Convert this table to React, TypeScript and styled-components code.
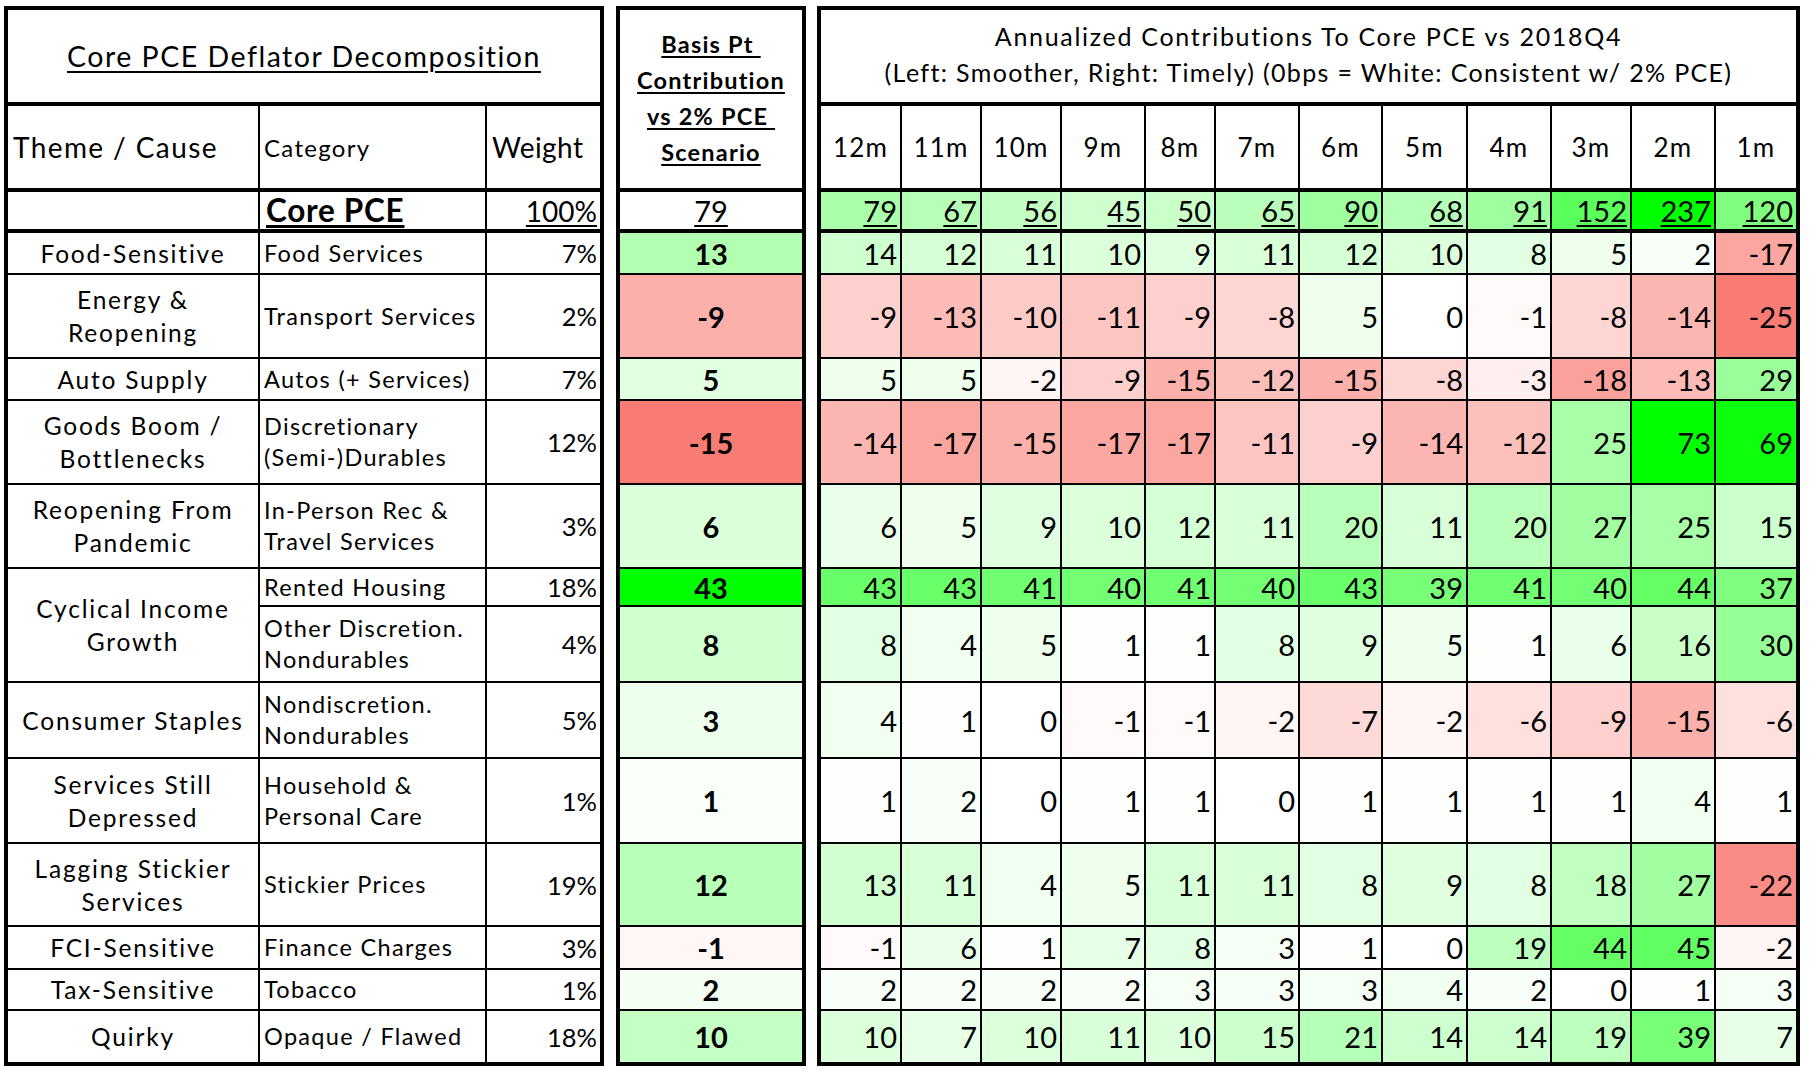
import React from "react";
import styled, { createGlobalStyle } from "styled-components";

const GlobalStyle = createGlobalStyle`
  body {
    margin: 0;
    background: #fff;
    color: #000;
    font-family: Lato, "Noto Sans", sans-serif;
  }
`;

// row heights are shared by the three panels, so the lines meet up
const ROWS = "96px 86px 41px 42px 84px 42px 84px 84px 38px 76px 76px 85px 83px 43px 41px 51px";
const LAST_ROW = 15;

const Page = styled.div`
  display: flex;
  align-items: flex-start;
  padding: 6px 0 0 4px;
`;

const Panel = styled.div<{ $cols: string; $gap: number }>`
  display: grid;
  grid-template-columns: ${(p) => p.$cols};
  grid-template-rows: ${ROWS};
  border: 4px solid #000;
  margin-left: ${(p) => p.$gap}px;
`;

const Cell = styled.div<{ $bottom: number; $right: boolean; $bg?: string }>`
  box-sizing: border-box;
  display: flex;
  align-items: center;
  overflow: hidden;
  white-space: pre;
  border-bottom: ${(p) => p.$bottom}px solid #000;
  border-right: ${(p) => (p.$right ? 2 : 0)}px solid #000;
  background: ${(p) => p.$bg ?? "#fff"};
`;

const TitleCell = styled(Cell)<{ $span: number; $lift?: number }>`
  grid-column: span ${(p) => p.$span};
  flex-direction: column;
  justify-content: center;
  text-align: center;
  padding-bottom: ${(p) => p.$lift ?? 0}px;
`;

const MainTitle = styled.span`
  font-size: 28.5px;
  letter-spacing: 1.5px;
  text-decoration: underline;
  text-underline-offset: 4px;
  text-decoration-thickness: 1.5px;
`;

const SubTitle = styled.span<{ $spacing: number }>`
  font-size: 25px;
  letter-spacing: ${(p) => p.$spacing}px;
  line-height: 36px;
`;

const BasisTitle = styled(Cell)`
  grid-row: span 2;
  justify-content: center;
  text-align: center;
  font-size: 23.5px;
  font-weight: 700;
  letter-spacing: 1.2px;
  line-height: 36px;
  padding-bottom: 2px;
  text-decoration: underline;
  text-underline-offset: 3px;
  text-decoration-thickness: 1.5px;
`;

const HeadCell = styled(Cell)<{ $size: number; $pad?: number; $spacing?: number }>`
  font-size: ${(p) => p.$size}px;
  letter-spacing: ${(p) => p.$spacing ?? 0}px;
  padding-left: ${(p) => p.$pad ?? 4}px;
`;

const MonthCell = styled(Cell)`
  justify-content: center;
  font-size: 26px;
  letter-spacing: 1.2px;
`;

const ThemeCell = styled(Cell)<{ $span: number }>`
  grid-column: 1;
  grid-row: span ${(p) => p.$span};
  justify-content: center;
  text-align: center;
  font-size: 24.5px;
  letter-spacing: 1.8px;
  line-height: 33px;
`;

const CategoryCell = styled(Cell)<{ $strong?: boolean }>`
  grid-column: 2;
  padding-left: ${(p) => (p.$strong ? 6 : 4)}px;
  font-size: ${(p) => (p.$strong ? 31.5 : 23.5)}px;
  font-weight: ${(p) => (p.$strong ? 700 : 400)};
  letter-spacing: ${(p) => (p.$strong ? 0.7 : 1.3)}px;
  line-height: 31px;
  text-decoration: ${(p) => (p.$strong ? "underline" : "none")};
  text-underline-offset: 3px;
`;

const WeightCell = styled(Cell)<{ $under?: boolean }>`
  grid-column: 3;
  justify-content: flex-end;
  padding-right: 3px;
  font-size: ${(p) => (p.$under ? 28 : 25.5)}px;
  text-decoration: ${(p) => (p.$under ? "underline" : "none")};
  text-underline-offset: 3px;
`;

const BasisCell = styled(Cell)<{ $under?: boolean }>`
  justify-content: center;
  font-size: 29px;
  font-weight: ${(p) => (p.$under ? 400 : 700)};
  text-decoration: ${(p) => (p.$under ? "underline" : "none")};
  text-underline-offset: 3px;
`;

const NumCell = styled(Cell)<{ $under?: boolean }>`
  justify-content: flex-end;
  padding-right: 3px;
  font-size: 29px;
  text-decoration: ${(p) => (p.$under ? "underline" : "none")};
  text-underline-offset: 3px;
  text-decoration-thickness: 1.5px;
`;

type Row = {
  theme?: string;
  span?: number;
  category: string;
  weight: string;
  basis: number;
  months: number[];
};

const MONTHS = ["12m", "11m", "10m", "9m", "8m", "7m", "6m", "5m", "4m", "3m", "2m", "1m"];
const MONTH_COLS = "81px 80px 80px 84px 70px 84px 83px 85px 84px 80px 84px 80px";

const CORE = { basis: 79, months: [79, 67, 56, 45, 50, 65, 90, 68, 91, 152, 237, 120] };

const ROWS_DATA: Row[] = [
  { theme: "Food-Sensitive", category: "Food Services", weight: "7%", basis: 13, months: [14, 12, 11, 10, 9, 11, 12, 10, 8, 5, 2, -17] },
  { theme: "Energy &\nReopening", category: "Transport Services", weight: "2%", basis: -9, months: [-9, -13, -10, -11, -9, -8, 5, 0, -1, -8, -14, -25] },
  { theme: "Auto Supply", category: "Autos (+ Services)", weight: "7%", basis: 5, months: [5, 5, -2, -9, -15, -12, -15, -8, -3, -18, -13, 29] },
  { theme: "Goods Boom /\nBottlenecks", category: "Discretionary\n(Semi-)Durables", weight: "12%", basis: -15, months: [-14, -17, -15, -17, -17, -11, -9, -14, -12, 25, 73, 69] },
  { theme: "Reopening From\nPandemic", category: "In-Person Rec &\nTravel Services", weight: "3%", basis: 6, months: [6, 5, 9, 10, 12, 11, 20, 11, 20, 27, 25, 15] },
  { theme: "Cyclical Income\nGrowth", span: 2, category: "Rented Housing", weight: "18%", basis: 43, months: [43, 43, 41, 40, 41, 40, 43, 39, 41, 40, 44, 37] },
  { category: "Other Discretion.\nNondurables", weight: "4%", basis: 8, months: [8, 4, 5, 1, 1, 8, 9, 5, 1, 6, 16, 30] },
  { theme: "Consumer Staples", category: "Nondiscretion.\nNondurables", weight: "5%", basis: 3, months: [4, 1, 0, -1, -1, -2, -7, -2, -6, -9, -15, -6] },
  { theme: "Services Still\nDepressed", category: "Household &\nPersonal Care", weight: "1%", basis: 1, months: [1, 2, 0, 1, 1, 0, 1, 1, 1, 1, 4, 1] },
  { theme: "Lagging Stickier\nServices", category: "Stickier Prices", weight: "19%", basis: 12, months: [13, 11, 4, 5, 11, 11, 8, 9, 8, 18, 27, -22] },
  { theme: "FCI-Sensitive", category: "Finance Charges", weight: "3%", basis: -1, months: [-1, 6, 1, 7, 8, 3, 1, 0, 19, 44, 45, -2] },
  { theme: "Tax-Sensitive", category: "Tobacco", weight: "1%", basis: 2, months: [2, 2, 2, 2, 3, 3, 3, 4, 2, 0, 1, 3] },
  { theme: "Quirky", category: "Opaque / Flawed", weight: "18%", basis: 10, months: [10, 7, 10, 11, 10, 15, 21, 14, 14, 19, 39, 7] },
];

// green / white / red scale, white at zero
const RED = [249, 124, 116];
const heat = (v: number, max: number, min: number) => {
  if (v >= 0) {
    const t = Math.min(v / max, 1);
    const c = Math.round(255 * (1 - t));
    return `rgb(${c},255,${c})`;
  }
  const t = Math.min(v / min, 1);
  const mix = (k: number) => Math.round(255 + (k - 255) * t);
  return `rgb(${mix(RED[0])},${mix(RED[1])},${mix(RED[2])})`;
};

const lineBelow = (row: number) => (row <= 2 ? 4 : row === LAST_ROW ? 0 : 2);

const App = () => {
  const basisMax = Math.max(...ROWS_DATA.map((r) => r.basis));
  const basisMin = Math.min(...ROWS_DATA.map((r) => r.basis));
  const gridMax = Math.max(...ROWS_DATA.flatMap((r) => r.months));
  const gridMin = Math.min(...ROWS_DATA.flatMap((r) => r.months));
  const coreMax = Math.max(...CORE.months);

  return (
    <>
      <GlobalStyle />
      <Page>
        <Panel $cols="252px 227px 113px" $gap={0}>
          <TitleCell $span={3} $bottom={4} $right={false}>
            <MainTitle>Core PCE Deflator Decomposition</MainTitle>
          </TitleCell>
          <HeadCell $size={28} $pad={5} $spacing={1.4} $bottom={4} $right>
            Theme / Cause
          </HeadCell>
          <HeadCell $size={24} $spacing={1.3} $bottom={4} $right>
            Category
          </HeadCell>
          <HeadCell $size={28} $pad={5} $spacing={0.4} $bottom={4} $right={false}>
            Weight
          </HeadCell>
          <ThemeCell $span={1} $bottom={4} $right />
          <CategoryCell $strong $bottom={4} $right>
            Core PCE
          </CategoryCell>
          <WeightCell $under $bottom={4} $right={false}>
            100%
          </WeightCell>
          {ROWS_DATA.map((r, i) => {
            const row = i + 3;
            const span = r.span ?? 1;
            return (
              <React.Fragment key={r.category}>
                {r.theme && (
                  <ThemeCell $span={span} $bottom={lineBelow(row + span - 1)} $right>
                    {r.theme}
                  </ThemeCell>
                )}
                <CategoryCell $bottom={lineBelow(row)} $right>
                  {r.category}
                </CategoryCell>
                <WeightCell $bottom={lineBelow(row)} $right={false}>
                  {r.weight}
                </WeightCell>
              </React.Fragment>
            );
          })}
        </Panel>

        <Panel $cols="182px" $gap={12}>
          <BasisTitle $bottom={4} $right={false}>
            {"Basis Pt\u00a0\nContribution\nvs 2% PCE\u00a0\nScenario"}
          </BasisTitle>
          <BasisCell $under $bottom={4} $right={false}>
            {CORE.basis}
          </BasisCell>
          {ROWS_DATA.map((r, i) => (
            <BasisCell
              key={r.category}
              $bottom={lineBelow(i + 3)}
              $right={false}
              $bg={heat(r.basis, basisMax, basisMin)}
            >
              {r.basis}
            </BasisCell>
          ))}
        </Panel>

        <Panel $cols={MONTH_COLS} $gap={11}>
          <TitleCell $span={12} $lift={4} $bottom={4} $right={false}>
            <SubTitle $spacing={1.7}>Annualized Contributions To Core PCE vs 2018Q4</SubTitle>
            <SubTitle $spacing={1.35}>
              (Left: Smoother, Right: Timely) (0bps = White: Consistent w/ 2% PCE)
            </SubTitle>
          </TitleCell>
          {MONTHS.map((m, j) => (
            <MonthCell key={m} $bottom={4} $right={j < 11}>
              {m}
            </MonthCell>
          ))}
          {CORE.months.map((v, j) => (
            <NumCell key={j} $under $bottom={4} $right={j < 11} $bg={heat(v, coreMax, -1)}>
              {v}
            </NumCell>
          ))}
          {ROWS_DATA.map((r, i) =>
            r.months.map((v, j) => (
              <NumCell
                key={`${i}-${j}`}
                $bottom={lineBelow(i + 3)}
                $right={j < 11}
                $bg={heat(v, gridMax, gridMin)}
              >
                {v}
              </NumCell>
            ))
          )}
        </Panel>
      </Page>
    </>
  );
};

export default App;
